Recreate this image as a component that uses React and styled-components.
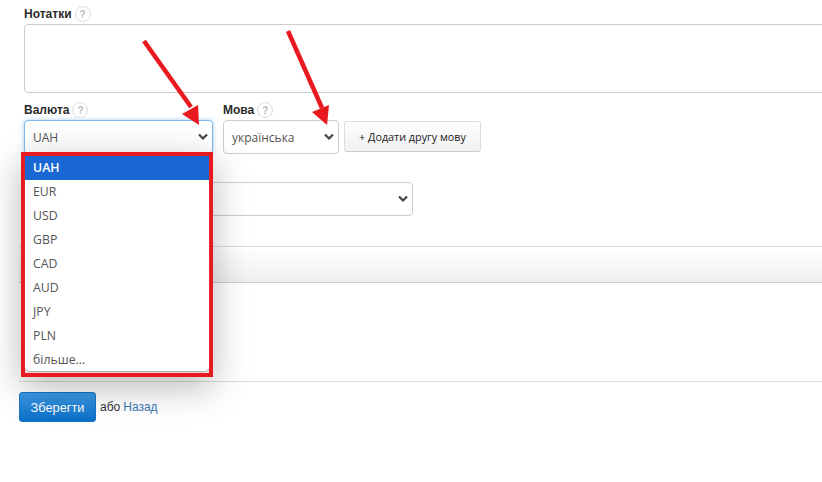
import styled, { createGlobalStyle } from "styled-components";

const GlobalStyle = createGlobalStyle`
  html, body {
    margin: 0;
    padding: 0;
    background: #fff;
    overflow: hidden;
  }
  body {
    font-family: "Open Sans", "Liberation Sans", sans-serif;
    color: #333;
  }
`;

const Page = styled.div`
  position: relative;
  width: 822px;
  height: 482px;
  overflow: hidden;
`;

const Section = styled.div`
  padding: 6px 0 0 24px;
`;

const FieldLabel = styled.div`
  display: flex;
  align-items: center;
  gap: 3px;
  height: 16px;
  font-family: "Liberation Sans", sans-serif;
  font-size: 12px;
  font-weight: bold;
  color: #2b2b2b;
  margin-bottom: 2px;
`;

const Help = styled.span`
  width: 16px;
  height: 16px;
  box-sizing: border-box;
  border: 1px solid #ddd;
  border-radius: 50%;
  display: flex;
  align-items: center;
  justify-content: center;
  font-size: 10px;
  font-weight: bold;
  color: #bbb;
  background: #fff;
`;

const Notes = styled.div`
  width: 820px;
  height: 69px;
  box-sizing: border-box;
  border: 1px solid #ccc;
  border-radius: 4px;
  background: #fff;
`;

const Row = styled.div`
  display: flex;
  align-items: flex-start;
  gap: 10px;
  margin-top: 9px;
  padding-left: 24px;
`;

const Field = styled.div`
  position: relative;
  width: ${(p) => p.$width}px;
`;

const Select = styled.div`
  width: ${(p) => p.$width}px;
  height: 34px;
  box-sizing: border-box;
  display: flex;
  align-items: center;
  justify-content: space-between;
  padding: 0 3px 0 8px;
  border: 1px solid ${(p) => (p.$focus ? "#7fb8ea" : "#ccc")};
  border-radius: 4px;
  background: #fff;
  box-shadow: ${(p) => (p.$focus ? "0 0 4px rgba(102, 175, 233, 0.6)" : "none")};
  font-size: 12px;
  color: #555;
`;

const Chevron = () => (
  <svg width="12" height="8" viewBox="0 0 12 8">
    <path d="M2 1.5 L6 5.5 L10 1.5" fill="none" stroke="#444" strokeWidth="2.2" />
  </svg>
);

const AddButton = styled.div`
  width: 137px;
  height: 31px;
  box-sizing: border-box;
  margin: 19px 0 0 -5px;
  display: flex;
  align-items: center;
  justify-content: center;
  border: 1px solid #ddd;
  border-bottom-color: #ccc;
  border-radius: 3px;
  background: linear-gradient(#fff, #f0f0f0);
  font-size: 10.8px;
  color: #222;
`;

const Dropdown = styled.div`
  position: absolute;
  z-index: 3;
  left: -3px;
  top: 50px;
  width: 192px;
  height: 225px;
  box-sizing: border-box;
  border: 4px solid #e8191f;
  background: #f4d8d8;
  box-shadow: 0 10px 34px rgba(0, 0, 0, 0.28);
`;

const OptionList = styled.div`
  height: 215px;
  background: #fff;
  border-radius: 0 0 5px 5px;
  box-shadow: 0 1px 1px #aaa;
  overflow: hidden;
`;

const Option = styled.div`
  height: 24px;
  line-height: 24px;
  padding-left: 8px;
  font-size: 12.3px;
  color: ${(p) => (p.$active ? "#fff" : "#555")};
  background: ${(p) => (p.$active ? "#1967d2" : "#fff")};
  font-weight: ${(p) => (p.$active ? 600 : 400)};
`;

const Wide = styled(Select)`
  margin: 28px 0 0 24px;
`;

const Bar = styled.div`
  height: 37px;
  box-sizing: border-box;
  margin: 30px 0 0 19px;
  border-top: 1px solid #ddd;
  border-bottom: 1px solid #ccc;
  background: linear-gradient(#fff, #eeeff0);
`;

const Divider = styled.div`
  height: 1px;
  margin: 98px 0 0 19px;
  background: #ddd;
`;

const Actions = styled.div`
  display: flex;
  align-items: center;
  gap: 4px;
  margin: 10px 0 0 19px;
  font-family: "Liberation Sans", sans-serif;
  font-size: 12px;
  color: #333;
`;

const SaveButton = styled.div`
  width: 77px;
  height: 30px;
  box-sizing: border-box;
  display: flex;
  align-items: center;
  justify-content: center;
  border: 1px solid #1a74c4;
  border-radius: 3px;
  background: linear-gradient(#3b9ae6, #0a6fc7);
  color: #fff;
  font-size: 12.8px;
`;

const BackLink = styled.a`
  color: #3a76b4;
  margin-left: -1px;
`;

const Arrows = styled.svg`
  position: absolute;
  z-index: 4;
  left: 0;
  top: 0;
  pointer-events: none;
`;

const currencies = ["UAH", "EUR", "USD", "GBP", "CAD", "AUD", "JPY", "PLN", "більше..."];

export default function App() {
  return (
    <Page>
      <GlobalStyle />
      <Section>
        <FieldLabel>
          Нотатки <Help>?</Help>
        </FieldLabel>
        <Notes />
      </Section>
      <Row>
        <Field $width={189}>
          <FieldLabel>
            Валюта <Help>?</Help>
          </FieldLabel>
          <Select $width={189} $focus>
            UAH
            <Chevron />
          </Select>
          <Dropdown>
            <OptionList>
              {currencies.map((c, i) => (
                <Option key={c} $active={i === 0}>
                  {c}
                </Option>
              ))}
            </OptionList>
          </Dropdown>
        </Field>
        <Field $width={116}>
          <FieldLabel>
            Мова <Help>?</Help>
          </FieldLabel>
          <Select $width={116}>
            українська
            <Chevron />
          </Select>
        </Field>
        <AddButton>+ Додати другу мову</AddButton>
      </Row>
      <Wide $width={389}>
        <span />
        <Chevron />
      </Wide>
      <Bar />
      <Divider />
      <Actions>
        <SaveButton>Зберегти</SaveButton>
        або <BackLink>Назад</BackLink>
      </Actions>
      <Arrows width="822" height="482" viewBox="0 0 822 482">
        <path d="M144 41 L191 107" stroke="#e8191f" strokeWidth="4.5" fill="none" />
        <path d="M199 125 L182 114 L198 105 Z" fill="#e8191f" />
        <path d="M288 31 L322 108" stroke="#e8191f" strokeWidth="4.5" fill="none" />
        <path d="M327 125 L312 112 L329 105 Z" fill="#e8191f" />
      </Arrows>
    </Page>
  );
}
